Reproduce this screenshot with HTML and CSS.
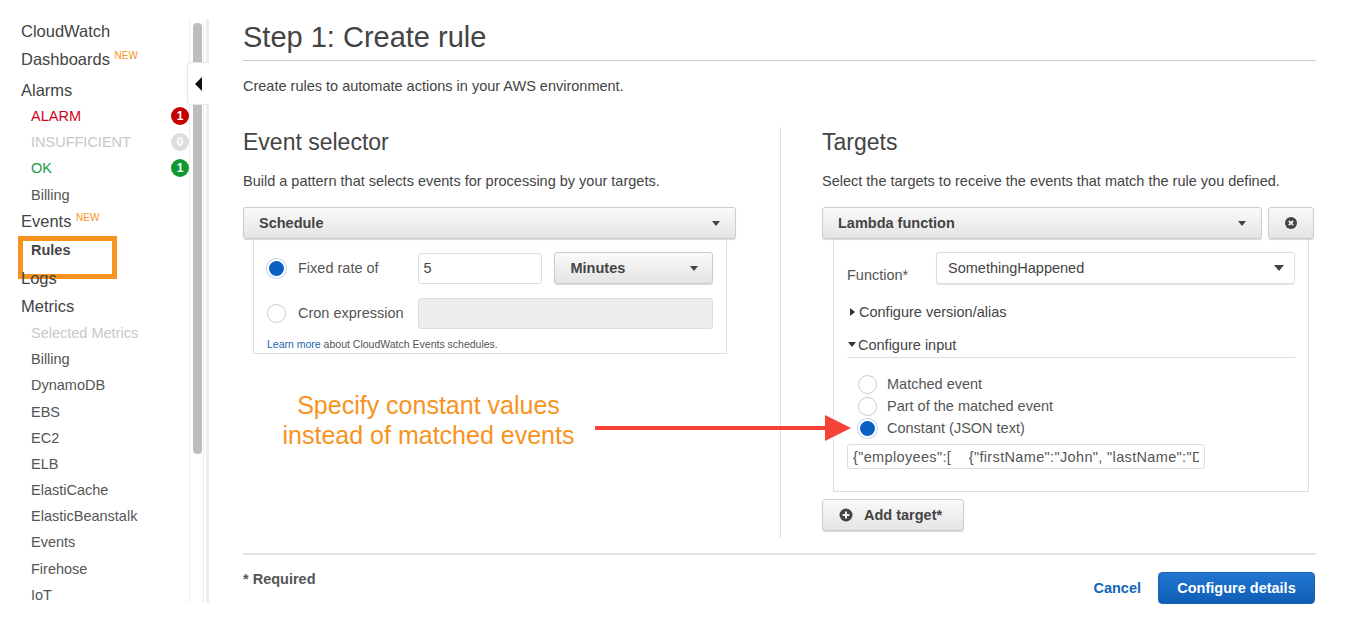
FILE: index.html
```html
<!DOCTYPE html>
<html lang="en">
<head>
    <meta charset="UTF-8">
    <meta name="viewport" content="width=device-width, initial-scale=1.0">
    <title>Step 1: Create rule</title>
    <link rel="stylesheet" href="styles.css">
</head>
<body>
    <div class="page">
        <!-- Left navigation -->
        <aside class="sidebar">
            <nav class="nav">
                <a class="nav-top nav-first">CloudWatch</a>
                <a class="nav-top nav-dash">Dashboards <sup class="new">NEW</sup></a>
                <a class="nav-top nav-alarms">Alarms</a>
                <a class="nav-sub alarm">ALARM<span class="count count-red">1</span></a>
                <a class="nav-sub muted">INSUFFICIENT<span class="count count-grey">0</span></a>
                <a class="nav-sub ok">OK<span class="count count-green">1</span></a>
                <a class="nav-sub">Billing</a>
                <a class="nav-top nav-events">Events <sup class="new">NEW</sup></a>
                <a class="nav-sub nav-rules">Rules</a>
                <a class="nav-top nav-logs">Logs</a>
                <a class="nav-top nav-metrics">Metrics</a>
                <a class="nav-sub muted">Selected Metrics</a>
                <a class="nav-sub">Billing</a>
                <a class="nav-sub">DynamoDB</a>
                <a class="nav-sub">EBS</a>
                <a class="nav-sub">EC2</a>
                <a class="nav-sub">ELB</a>
                <a class="nav-sub">ElastiCache</a>
                <a class="nav-sub">ElasticBeanstalk</a>
                <a class="nav-sub">Events</a>
                <a class="nav-sub">Firehose</a>
                <a class="nav-sub">IoT</a>
            </nav>
            <div class="scrollbar"><div class="thumb"></div></div>
            <div class="collapse-tab"><span class="tri-left"></span></div>
        </aside>

        <main class="main">
            <h1 class="title">Step 1: Create rule</h1>
            <p class="intro">Create rules to automate actions in your AWS environment.</p>

            <div class="columns">
                <!-- Event selector -->
                <section class="col col-left">
                    <h2>Event selector</h2>
                    <p class="desc">Build a pattern that selects events for processing by your targets.</p>
                    <div class="btn-select"><span>Schedule</span><i class="caret"></i></div>
                    <div class="panel panel-schedule">
                        <div class="sched-row">
                            <span class="radio radio-on"></span>
                            <label class="sched-label">Fixed rate of</label>
                            <input class="field field-rate" type="text" value="5" readonly>
                            <div class="btn-select btn-minutes"><span>Minutes</span><i class="caret"></i></div>
                        </div>
                        <div class="sched-row sched-cron">
                            <span class="radio"></span>
                            <label class="sched-label">Cron expression</label>
                            <input class="field field-cron" type="text" disabled>
                        </div>
                        <p class="learn"><a>Learn more</a> about CloudWatch Events schedules.</p>
                    </div>
                    <p class="callout">Specify constant values<br>instead of matched events</p>
                </section>

                <!-- Targets -->
                <section class="col col-right">
                    <h2>Targets</h2>
                    <p class="desc">Select the targets to receive the events that match the rule you defined.</p>
                    <div class="target-head">
                        <div class="btn-select btn-lambda"><span>Lambda function</span><i class="caret"></i></div>
                        <button class="btn-remove" type="button">
                            <svg width="14" height="14" viewBox="0 0 14 14"><circle cx="7" cy="7" r="6" fill="#444"/><path d="M4.8 4.8l4.4 4.4M9.2 4.8l-4.4 4.4" stroke="#f0f0f0" stroke-width="1.8"/></svg>
                        </button>
                    </div>
                    <div class="panel panel-target">
                        <div class="fn-row">
                            <label class="fn-label">Function*</label>
                            <div class="fn-select"><span>SomethingHappened</span><i class="caret caret-big"></i></div>
                        </div>
                        <div class="toggle toggle-version"><i class="tri-right"></i>Configure version/alias</div>
                        <div class="toggle toggle-input"><i class="tri-down"></i>Configure input</div>
                        <ul class="radio-list">
                            <li><span class="radio"></span>Matched event</li>
                            <li><span class="radio"></span>Part of the matched event</li>
                            <li><span class="radio radio-on"></span>Constant (JSON text)</li>
                        </ul>
                        <input class="field field-json" type="text" value='{"employees":[    {"firstName":"John", "lastName":"Doe"}' readonly>
                    </div>
                    <button class="btn-add" type="button">
                        <svg width="14" height="14" viewBox="0 0 14 14"><circle cx="7" cy="7" r="6.5" fill="#444"/><path d="M7 3.6v6.8M3.6 7h6.8" stroke="#f0f0f0" stroke-width="2"/></svg>
                        Add target*
                    </button>
                </section>

                <!-- Arrow pointing from the callout to the Constant radio -->
                <svg class="arrow" width="256" height="26" viewBox="0 0 256 26"><path d="M0 11h230v-11l26 13-26 13v-11H0z" fill="#f44336"/></svg>
            </div>

            <footer class="footer">
                <span class="required">* Required</span>
                <div class="actions">
                    <a class="cancel">Cancel</a>
                    <button class="btn-primary" type="button">Configure details</button>
                </div>
            </footer>
        </main>
    </div>
</body>
</html>
```

FILE: styles.css
```css
* {
    box-sizing: border-box;
    margin: 0;
    padding: 0;
    font-family: "Liberation Sans", Arial, sans-serif;
}

html, body {
    height: 100%;
    overflow: hidden;
    background-color: #fff;
}

body {
    color: #444;
}

.page {
    display: flex;
    height: 625px;
}

/* Sidebar */
.sidebar {
    position: relative;
    flex: none;
    display: flex;
    width: 209px;
    height: 584px;
    margin-top: 19px;
    overflow: visible;
}

.nav {
    width: 189px;
    padding-left: 21px;
    overflow: hidden;
}

.nav a {
    display: block;
    position: relative;
    white-space: nowrap;
}

.nav-top {
    height: 28px;
    font-size: 16.5px;
    line-height: 24px;
    color: #444;
}

.nav-dash { height: 30px; }
.nav-alarms { height: 27px; padding-top: 1px; }
.nav-events { height: 29px; }
.nav-logs { margin-top: 2px; }
.nav-metrics { height: 27px; }

.nav-sub {
    height: 26.2px;
    padding-left: 10px;
    font-size: 14.5px;
    line-height: 24px;
    color: #555;
}

.nav-rules {
    font-weight: bold;
    color: #444;
}

/* orange highlight drawn round the Rules item */
.nav-rules::before {
    content: "";
    position: absolute;
    left: -3px;
    top: -2px;
    width: 89px;
    height: 33px;
    border: 5px solid #f7931e;
}

.alarm { color: #d0021b; }
.muted { color: #c8c8c8; }
.ok { color: #1a9c3e; }

.new {
    font-size: 10px;
    color: #f7931e;
    vertical-align: 6px;
    line-height: 0;
}

.count {
    position: absolute;
    right: 0;
    top: 3px;
    width: 18px;
    height: 18px;
    border-radius: 50%;
    font-size: 12px;
    font-weight: bold;
    line-height: 18px;
    text-align: center;
    color: #fff;
}

.count-red { background-color: #c40000; }
.count-grey { background-color: #ddd; }
.count-green { background-color: #0f9a30; }

.scrollbar {
    width: 15px;
    border-left: 1px solid #eee;
    border-right: 1px solid #eee;
    padding: 4px 2px 0 3px;
}

.sidebar::after {
    content: "";
    width: 3px;
    margin-left: 2px;
    background-color: #eee;
}

.thumb {
    width: 9px;
    height: 431px;
    border-radius: 4px;
    background-color: #bdbdbd;
}

.collapse-tab {
    position: absolute;
    left: 187px;
    top: 43px;
    width: 22px;
    height: 43px;
    display: flex;
    align-items: center;
    justify-content: center;
    background-color: #fff;
    border: 1px solid #e6e6e6;
    border-right: 0;
    border-radius: 4px 0 0 4px;
}

.tri-left {
    border-style: solid;
    border-width: 7px 7px 7px 0;
    border-color: transparent #111 transparent transparent;
}

/* Main */
.main {
    flex: none;
    width: 1073px;
    margin-left: 34px;
}

.title {
    height: 43px;
    margin-top: 18px;
    font-size: 29px;
    font-weight: normal;
    line-height: 38px;
    color: #444;
    border-bottom: 1px solid #ccc;
}

.intro {
    margin-top: 15px;
    font-size: 14.5px;
    line-height: 20px;
    color: #444;
}

.columns {
    position: relative;
    display: grid;
    grid-template-columns: 538px 535px;
    height: 411px;
    margin-top: 31px;
}

.col h2 {
    font-size: 23px;
    font-weight: normal;
    line-height: 30px;
    color: #444;
}

.desc {
    margin-top: 14px;
    font-size: 14.5px;
    line-height: 20px;
    color: #444;
}

.col-left {
    padding-right: 44px;
    border-right: 1px solid #ddd;
}

.col-right {
    padding-left: 41px;
    padding-right: 0;
}

.btn-select {
    display: flex;
    align-items: center;
    justify-content: space-between;
    height: 32px;
    margin-top: 16px;
    padding: 0 15px;
    font-size: 14.5px;
    font-weight: bold;
    color: #444;
    background: linear-gradient(#fafafa, #e4e4e4);
    border: 1px solid #ccc;
    border-radius: 3px;
    box-shadow: 0 1px 1px rgba(0, 0, 0, 0.15);
}

.caret {
    width: 0;
    height: 0;
    border-style: solid;
    border-width: 5px 4.5px 0 4.5px;
    border-color: #444 transparent transparent transparent;
}

.caret-big {
    border-width: 6px 5.5px 0 5.5px;
}

.panel {
    border: 1px solid #ddd;
    border-top: 0;
}

.panel-schedule {
    height: 115px;
    margin: 0 9px 0 10px;
    padding: 13px 13px 0 13px;
}

.sched-row {
    display: flex;
    align-items: center;
    height: 32px;
}

.sched-cron {
    margin-top: 13px;
}

.radio {
    flex: none;
    display: inline-block;
    width: 19px;
    height: 19px;
    border: 1px solid #ccc;
    border-radius: 50%;
    background-color: #fff;
}

.radio-on {
    background-color: #0a5fc4;
    border: 2px solid #fff;
    box-shadow: 0 0 0 1px #c4d4e8;
}

.sched-label {
    width: 120px;
    margin-left: 12px;
    font-size: 14.5px;
    color: #555;
}

.field {
    height: 31px;
    padding: 0 5px;
    font-size: 14.5px;
    color: #444;
    background-color: #fff;
    border: 1px solid #ddd;
    border-radius: 3px;
    outline: none;
}

.field-rate {
    width: 124px;
}

.field-cron {
    width: 296px;
    background-color: #eee;
}

.btn-minutes {
    width: 160px;
    margin: 0 0 0 12px;
    padding-left: 16px;
    padding-right: 14px;
}

.learn {
    margin-top: 9px;
    font-size: 10.5px;
    line-height: 13px;
    color: #555;
}

.learn a {
    color: #1b65b0;
}

.callout {
    margin: 36px 0 0 0;
    padding-right: 0;
    width: 371px;
    font-size: 25px;
    line-height: 30px;
    text-align: center;
    color: #f7931e;
}

.target-head {
    display: flex;
    gap: 6px;
}

.btn-lambda {
    width: 440px;
}

.btn-remove {
    width: 46px;
    height: 32px;
    margin-top: 16px;
    display: flex;
    align-items: center;
    justify-content: center;
    background: linear-gradient(#fafafa, #e4e4e4);
    border: 1px solid #ccc;
    border-radius: 3px;
    box-shadow: 0 1px 1px rgba(0, 0, 0, 0.15);
}

.panel-target {
    width: 476px;
    height: 253px;
    margin-left: 11px;
    padding: 13px 13px 0 13px;
}

.fn-row {
    display: flex;
    height: 32px;
}

.fn-label {
    width: 89px;
    padding-top: 15px;
    font-size: 14.5px;
    line-height: 17px;
    color: #555;
}

.fn-select {
    display: flex;
    align-items: center;
    justify-content: space-between;
    width: 359px;
    padding: 0 10px 0 11px;
    font-size: 14.5px;
    color: #444;
    border: 1px solid #ddd;
    border-radius: 3px;
    box-shadow: 0 1px 1px rgba(0, 0, 0, 0.1);
}

.toggle {
    display: flex;
    align-items: center;
    font-size: 14.5px;
    color: #444;
}

.toggle-version {
    margin-top: 17px;
    height: 22px;
}

.toggle-input {
    margin-top: 11px;
    height: 24px;
    width: 448px;
    border-bottom: 1px solid #ddd;
    padding-bottom: 2px;
}

.tri-right {
    width: 0;
    height: 0;
    margin: 0 4px 0 3px;
    border-style: solid;
    border-width: 4.5px 0 4.5px 5px;
    border-color: transparent transparent transparent #333;
}

.tri-down {
    width: 0;
    height: 0;
    margin: 0 2px 0 1px;
    border-style: solid;
    border-width: 5px 4px 0 4px;
    border-color: #333 transparent transparent transparent;
}

.radio-list {
    list-style: none;
    margin-top: 15px;
    padding-left: 11px;
}

.radio-list li {
    display: flex;
    align-items: center;
    gap: 10px;
    height: 22px;
    font-size: 14.5px;
    color: #555;
}

.field-json {
    display: block;
    width: 358px;
    height: 25px;
    margin-top: 5px;
    font-size: 14.5px;
    letter-spacing: 0.35px;
    color: #555;
}

.btn-add {
    display: flex;
    align-items: center;
    gap: 11px;
    width: 142px;
    height: 32px;
    margin-top: 7px;
    padding-left: 16px;
    font-size: 14.5px;
    font-weight: bold;
    color: #444;
    background: linear-gradient(#fafafa, #e4e4e4);
    border: 1px solid #ccc;
    border-radius: 3px;
    box-shadow: 0 1px 1px rgba(0, 0, 0, 0.15);
}

.arrow {
    position: absolute;
    left: 352px;
    top: 288px;
}

.footer {
    display: flex;
    justify-content: space-between;
    height: 52px;
    margin-top: 15px;
    padding-top: 15px;
    border-top: 2px solid #e4e4e4;
}

.required {
    font-size: 14.5px;
    font-weight: bold;
    line-height: 18px;
    color: #555;
}

.actions {
    display: flex;
    align-items: center;
    gap: 17px;
    margin-right: 1px;
}

.cancel {
    font-size: 14.5px;
    font-weight: bold;
    color: #1166bb;
}

.btn-primary {
    width: 157px;
    height: 32px;
    font-size: 14.5px;
    font-weight: bold;
    color: #fff;
    background: linear-gradient(#2277d2, #0f5db5);
    border: 1px solid #1a62b4;
    border-radius: 4px;
}
```
